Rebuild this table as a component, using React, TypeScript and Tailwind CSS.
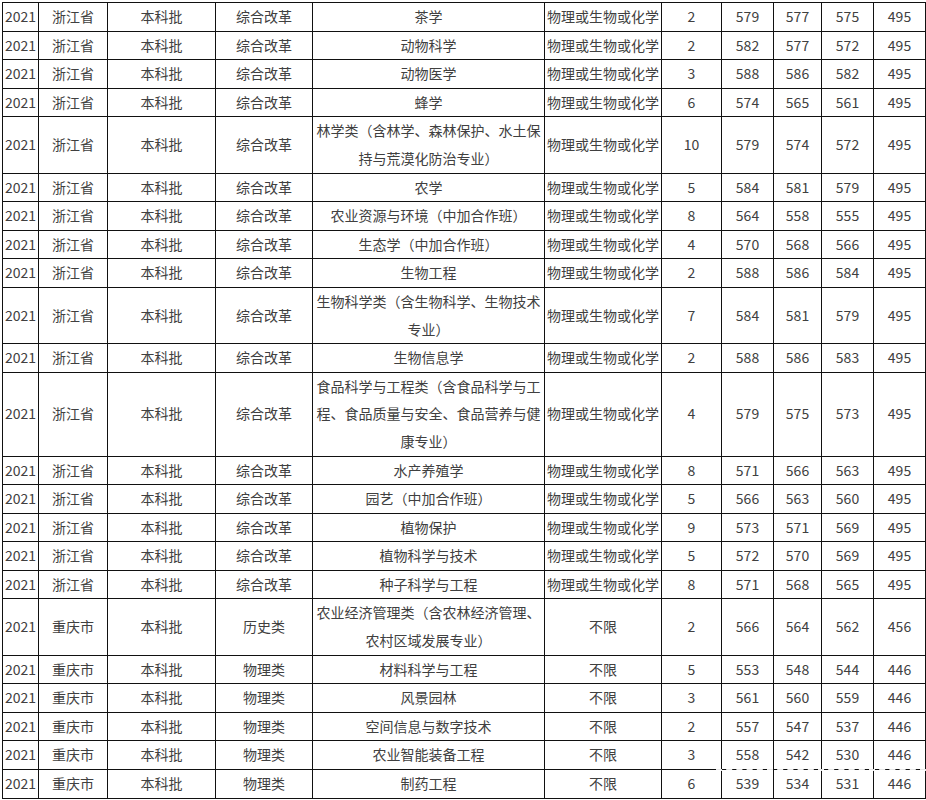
import React from "react";

type Row = [string, string, string, string, string, string, string, string, string, string, string];

const rows: Row[] = [
  ["2021", "浙江省", "本科批", "综合改革", "茶学", "物理或生物或化学", "2", "579", "577", "575", "495"],
  ["2021", "浙江省", "本科批", "综合改革", "动物科学", "物理或生物或化学", "2", "582", "577", "572", "495"],
  ["2021", "浙江省", "本科批", "综合改革", "动物医学", "物理或生物或化学", "3", "588", "586", "582", "495"],
  ["2021", "浙江省", "本科批", "综合改革", "蜂学", "物理或生物或化学", "6", "574", "565", "561", "495"],
  ["2021", "浙江省", "本科批", "综合改革", "林学类（含林学、森林保护、水土保持与荒漠化防治专业）", "物理或生物或化学", "10", "579", "574", "572", "495"],
  ["2021", "浙江省", "本科批", "综合改革", "农学", "物理或生物或化学", "5", "584", "581", "579", "495"],
  ["2021", "浙江省", "本科批", "综合改革", "农业资源与环境（中加合作班）", "物理或生物或化学", "8", "564", "558", "555", "495"],
  ["2021", "浙江省", "本科批", "综合改革", "生态学（中加合作班）", "物理或生物或化学", "4", "570", "568", "566", "495"],
  ["2021", "浙江省", "本科批", "综合改革", "生物工程", "物理或生物或化学", "2", "588", "586", "584", "495"],
  ["2021", "浙江省", "本科批", "综合改革", "生物科学类（含生物科学、生物技术专业）", "物理或生物或化学", "7", "584", "581", "579", "495"],
  ["2021", "浙江省", "本科批", "综合改革", "生物信息学", "物理或生物或化学", "2", "588", "586", "583", "495"],
  ["2021", "浙江省", "本科批", "综合改革", "食品科学与工程类（含食品科学与工程、食品质量与安全、食品营养与健康专业）", "物理或生物或化学", "4", "579", "575", "573", "495"],
  ["2021", "浙江省", "本科批", "综合改革", "水产养殖学", "物理或生物或化学", "8", "571", "566", "563", "495"],
  ["2021", "浙江省", "本科批", "综合改革", "园艺（中加合作班）", "物理或生物或化学", "5", "566", "563", "560", "495"],
  ["2021", "浙江省", "本科批", "综合改革", "植物保护", "物理或生物或化学", "9", "573", "571", "569", "495"],
  ["2021", "浙江省", "本科批", "综合改革", "植物科学与技术", "物理或生物或化学", "5", "572", "570", "569", "495"],
  ["2021", "浙江省", "本科批", "综合改革", "种子科学与工程", "物理或生物或化学", "8", "571", "568", "565", "495"],
  ["2021", "重庆市", "本科批", "历史类", "农业经济管理类（含农林经济管理、农村区域发展专业）", "不限", "2", "566", "564", "562", "456"],
  ["2021", "重庆市", "本科批", "物理类", "材料科学与工程", "不限", "5", "553", "548", "544", "446"],
  ["2021", "重庆市", "本科批", "物理类", "风景园林", "不限", "3", "561", "560", "559", "446"],
  ["2021", "重庆市", "本科批", "物理类", "空间信息与数字技术", "不限", "2", "557", "547", "537", "446"],
  ["2021", "重庆市", "本科批", "物理类", "农业智能装备工程", "不限", "3", "558", "542", "530", "446"],
  ["2021", "重庆市", "本科批", "物理类", "制药工程", "不限", "6", "539", "534", "531", "446"],
];

const widths = [36, 69, 108, 97, 232, 117, 60, 52, 48, 52, 52];

export default function App() {
  return (
    <div
      className="relative w-[926px] h-[800px] overflow-hidden bg-white pl-[2px] pt-[2px]"
      style={{ fontFamily: '"Noto Sans CJK SC", "Noto Sans", sans-serif' }}
    >
      <table className="table-fixed border-collapse w-[923px] text-[14px] leading-[27.6px] text-[#404040]">
        <colgroup>
          {widths.map((w, i) => (
            <col key={i} style={{ width: w }} />
          ))}
        </colgroup>
        <tbody>
          {rows.map((r, i) => (
            <tr key={i}>
              {r.map((c, j) => (
                <td
                  key={j}
                  className="border border-[#111] px-[1px] py-0 text-center align-middle whitespace-normal break-all"
                >
                  {c}
                </td>
              ))}
            </tr>
          ))}
        </tbody>
      </table>
      <div className="absolute left-[716px] top-[769px] w-[210px] border-t-2 border-dashed border-white opacity-90" />
    </div>
  );
}
